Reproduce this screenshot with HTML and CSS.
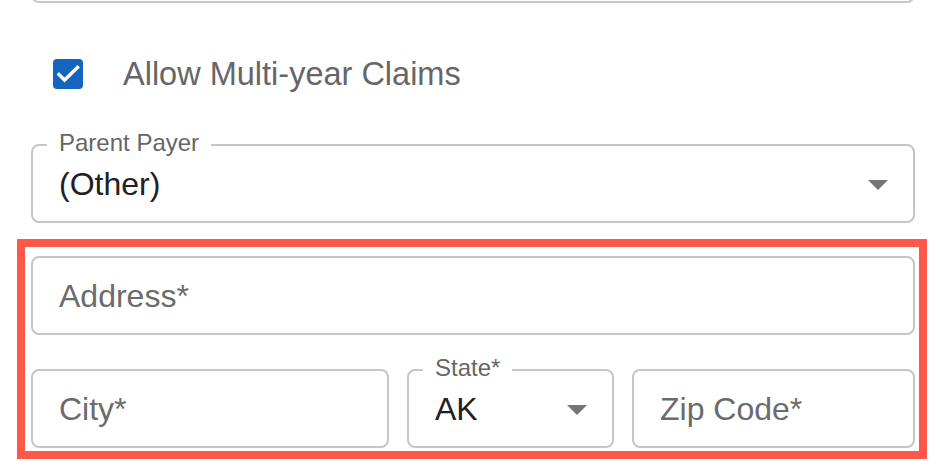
FILE: index.html
```html
<!DOCTYPE html>
<html lang="en">
<head>
<meta charset="utf-8">
<title>Payer form</title>
<link rel="stylesheet" href="styles.css">
</head>
<body>
<div class="page">
  <div class="field field-stub"></div>

  <label class="check-row">
    <svg class="checkbox" width="30" height="30" viewBox="0 0 30 30" aria-hidden="true">
      <rect x="0" y="0" width="30" height="30" rx="4" fill="#1565c0"/>
      <polyline points="6,15.5 11.5,21 24.5,8.5" fill="none" stroke="#ffffff" stroke-width="3.4" stroke-linecap="square" stroke-linejoin="miter"/>
    </svg>
    <span class="check-label">Allow Multi-year Claims</span>
  </label>

  <div class="field select parent">
    <span class="float-label">Parent Payer</span>
    <span class="value">(Other)</span>
    <svg class="arrow" width="20" height="10" viewBox="0 0 20 10" aria-hidden="true"><polygon points="0,0 20,0 10,10" fill="#757575"/></svg>
  </div>

  <div class="highlight">
    <div class="field">
      <span class="placeholder">Address*</span>
    </div>
    <div class="addr-row">
      <div class="field">
        <span class="placeholder">City*</span>
      </div>
      <div class="field select">
        <span class="float-label">State*</span>
        <span class="value">AK</span>
        <svg class="arrow" width="20" height="10" viewBox="0 0 20 10" aria-hidden="true"><polygon points="0,0 20,0 10,10" fill="#757575"/></svg>
      </div>
      <div class="field">
        <span class="placeholder">Zip Code*</span>
      </div>
    </div>
  </div>
</div>
</body>
</html>
```

FILE: styles.css
```css
* {
  box-sizing: border-box;
}

html, body {
  margin: 0;
  padding: 0;
  background: #ffffff;
}

body {
  font-family: "Liberation Sans", Arial, Helvetica, sans-serif;
  width: 940px;
  height: 466px;
  overflow: hidden;
}

.page {
  padding: 0 25px 0 31px;
}

.field {
  position: relative;
  display: flex;
  align-items: center;
  height: 79px;
  border: 2px solid #c6c6c6;
  border-radius: 8px;
  padding: 0 25px 0 26px;
  background: #ffffff;
}

.field-stub {
  margin-top: -76px;
}

.check-row {
  display: flex;
  align-items: center;
  height: 36px;
  margin-top: 53px;
  padding-left: 22px;
}

.checkbox {
  display: block;
  flex: none;
}

.check-label {
  margin-left: 40px;
  font-size: 32.5px;
  line-height: 36px;
  color: #666666;
}

.parent {
  margin-top: 52px;
}

.value,
.placeholder {
  flex: 1;
  font-size: 32px;
  line-height: 36px;
  white-space: nowrap;
}

.value {
  color: #212121;
}

.placeholder {
  color: #6b6b6b;
}

.arrow {
  display: block;
  flex: none;
  margin-top: 2px;
}

.float-label {
  position: absolute;
  top: -15px;
  left: 14px;
  padding: 0 12px;
  background: #ffffff;
  font-size: 24px;
  line-height: 24px;
  color: #666666;
  white-space: nowrap;
}

.highlight {
  margin: 16px -12px 0 -14px;
  border: 8px solid #fe584a;
  padding: 9px 4px 3px 6px;
  display: flex;
  flex-direction: column;
  gap: 34px;
}

.addr-row {
  display: grid;
  grid-template-columns: 358px 207px 1fr;
  column-gap: 18px;
}
```
